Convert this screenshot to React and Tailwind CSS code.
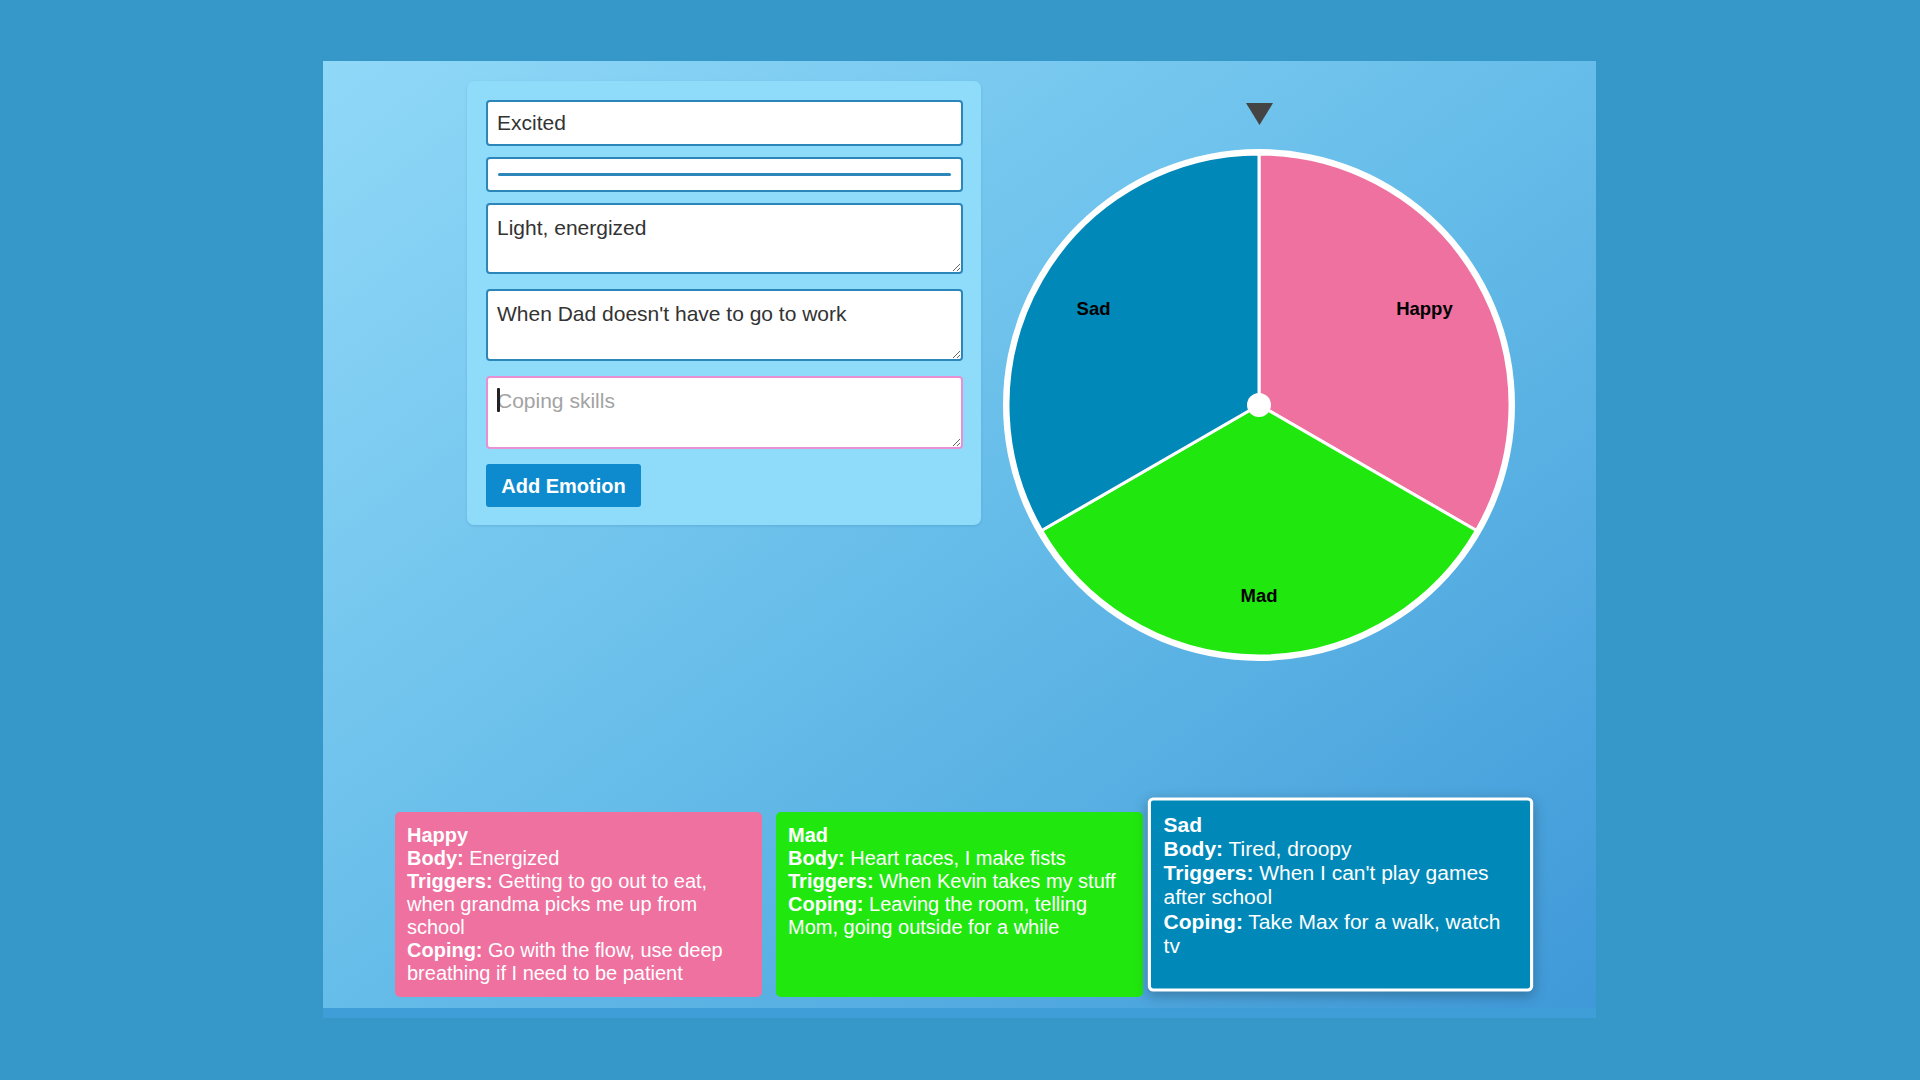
import React from "react";

const emotions = [
  {
    name: "Happy",
    color: "#ee71a0",
    body: "Energized",
    triggers: "Getting to go out to eat, when grandma picks me up from school",
    coping: "Go with the flow, use deep breathing if I need to be patient",
  },
  {
    name: "Mad",
    color: "#20e80e",
    body: "Heart races, I make fists",
    triggers: "When Kevin takes my stuff",
    coping: "Leaving the room, telling Mom, going outside for a while",
  },
  {
    name: "Sad",
    color: "#0089b8",
    body: "Tired, droopy",
    triggers: "When I can't play games after school",
    coping: "Take Max for a walk, watch tv",
  },
];

const CX = 256;
const CY = 324;
const R = 251;

const pt = (deg, r) => {
  const a = (deg * Math.PI) / 180;
  return [CX + r * Math.sin(a), CY - r * Math.cos(a)];
};

const Wheel = () => {
  const slices = [
    { name: "Happy", color: "#ee71a0", from: 0, to: 120 },
    { name: "Mad", color: "#20e80e", from: 120, to: 240 },
    { name: "Sad", color: "#0089b8", from: 240, to: 360 },
  ];
  return (
    <svg width="512" height="580" viewBox="0 0 512 580">
      <polygon points="243,22 270,22 256.5,44" fill="#444444" strokeLinejoin="round" />
      <circle cx={CX} cy={CY} r="256" fill="#ffffff" />
      {slices.map((s) => {
        const [x1, y1] = pt(s.from, R);
        const [x2, y2] = pt(s.to, R);
        return (
          <path
            key={s.name}
            d={`M${CX},${CY} L${x1},${y1} A${R},${R} 0 0 1 ${x2},${y2} Z`}
            fill={s.color}
            stroke="#ffffff"
            strokeWidth="3"
          />
        );
      })}
      {slices.map((s) => {
        const [lx, ly] = pt((s.from + s.to) / 2, 191);
        return (
          <text
            key={s.name + "-l"}
            x={lx}
            y={ly + 1}
            textAnchor="middle"
            dominantBaseline="middle"
            fontFamily="'Liberation Sans', Arial, sans-serif"
            fontWeight="700"
            fontSize="18.5"
            fill="#000000"
          >
            {s.name}
          </text>
        );
      })}
      <circle cx={CX} cy={CY} r="12" fill="#ffffff" />
    </svg>
  );
};

const Card = ({ e, active }) => (
  <div
    className={
      active
        ? "w-[367px] h-[185px] rounded-[5px] border-[3px] border-white px-3 pt-3 text-white scale-105 -translate-y-[10px] shadow-[0_4px_12px_rgba(0,0,0,0.25)]"
        : "w-[367px] h-[185px] rounded-[5px] px-3 pt-3 text-white"
    }
    style={{ backgroundColor: e.color }}
  >
    <div className="text-[20px] leading-[23px]">
      <div className="font-bold">{e.name}</div>
      <div>
        <b>Body:</b> {e.body}
      </div>
      <div>
        <b>Triggers:</b> {e.triggers}
      </div>
      <div>
        <b>Coping:</b> {e.coping}
      </div>
    </div>
  </div>
);

const App = () => {
  return (
    <div className="min-h-screen w-full bg-[#3598c9] pt-[61px] font-['Liberation_Sans',Arial,sans-serif]">
      <div className="ml-[323px] w-[1273px] h-[957px] flex flex-col bg-linear-to-br from-[#90d8f8] via-[#66bde9] to-[#3f99d8] border-b-[10px] border-[#3f9ed8]">
        <div className="flex items-start pt-[20px] pl-[144px]">
          <div className="w-[514px] bg-[#8fdcfa] rounded-[7px] pt-[19px] pb-[18px] pl-[19px] pr-[18px] flex flex-col shadow-[0_1px_3px_rgba(0,60,120,0.15)]">
            <input
              type="text"
              defaultValue="Excited"
              className="h-[46px] w-full rounded-[4px] border-2 border-[#2d86b9] bg-white px-[9px] text-[21px] text-[#333] outline-none"
            />
            <div className="mt-[11px] h-[35px] w-full rounded-[4px] border-2 border-[#2d86b9] bg-white flex items-center px-[10px]">
              <div className="h-[3px] w-full rounded-full bg-[#2d86b9]"></div>
            </div>
            <textarea
              defaultValue="Light, energized"
              className="mt-[11px] h-[71px] w-full rounded-[4px] border-2 border-[#2d86b9] bg-white px-[9px] pt-[7px] text-[21px] text-[#333] outline-none"
            />
            <textarea
              defaultValue="When Dad doesn't have to go to work"
              className="mt-[15px] h-[72px] w-full rounded-[4px] border-2 border-[#2d86b9] bg-white px-[9px] pt-[7px] text-[21px] text-[#333] outline-none"
            />
            <div className="relative mt-[15px]">
              <textarea
                placeholder="Coping skills"
                className="block h-[73px] w-full rounded-[4px] border-2 border-[#e98fd3] bg-white px-[9px] pt-[7px] text-[21px] text-[#333] placeholder:text-[#a3a3a3] outline-none"
              />
              <span className="absolute left-[11px] top-[12px] h-[24px] w-[3px] rounded-[1px] bg-[#222]"></span>
            </div>
            <button className="mt-[15px] h-[43px] w-[155px] rounded-[3px] bg-[#0e8bcf] text-[20px] font-bold text-white">
              Add Emotion
            </button>
          </div>
          <div className="ml-[22px]">
            <Wheel />
          </div>
        </div>

        <div className="mt-[151px] pl-[72px] flex items-start gap-[14px]">
          {emotions.map((e) => (
            <Card key={e.name} e={e} active={e.name === "Sad"} />
          ))}
        </div>
      </div>
    </div>
  );
};

export default App;
